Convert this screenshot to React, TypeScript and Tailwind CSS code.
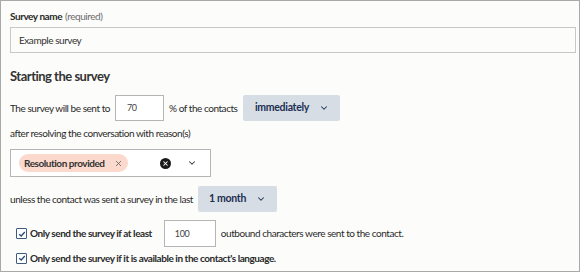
import { ChevronDown, X } from "lucide-react";

function Chevron() {
	return <ChevronDown className="w-[10px] h-[10px] text-[#1f3354]" strokeWidth={2.5} />;
}

function DropButton({ label, width }: { label: string; width: string }) {
	return (
		<button className={`${width} h-[26px] bg-[#d7dde5] rounded-[2px] flex items-center justify-center gap-[10px] text-[10.5px] font-bold text-[#1b2f52] tracking-[-0.3px]`}>
			{label}
			<Chevron />
		</button>
	);
}

function Check() {
	return (
		<span className="w-[11px] h-[11px] border border-[#3d5a80] rounded-[1px] bg-white flex items-center justify-center shrink-0">
			<svg viewBox="0 0 10 10" className="w-[8px] h-[8px]">
				<path d="M1.5 5.2 L4 7.5 L8.5 2.5" fill="none" stroke="#2b4a73" strokeWidth="1.6" />
			</svg>
		</span>
	);
}

export default function App() {
	return (
		<div
			className="w-[580px] h-[272px] border border-[#a9a9a9] bg-[#fcfcfa] pl-[9px] pr-[3px] text-[#2a2a2a] text-[10px] tracking-[-0.45px]"
			style={{ fontFamily: "Lato, 'Noto Sans', sans-serif" }}
		>
			{/* Survey name */}
			<div className="mt-[8px] h-[14px] flex items-center">
				<span className="font-bold text-[#2a2a2a]">Survey name</span>
				<span className="ml-[3px] text-[#6b6b6b]">(required)</span>
			</div>
			<div className="mt-[4px] h-[26px] border border-[#c8c8c8] bg-[#fcfcfa] flex items-center px-[8px] text-[#333]">
				Example survey
			</div>

			{/* Starting the survey */}
			<div className="mt-[15px] h-[18px] flex items-center text-[13px] font-bold text-[#333] tracking-[-0.5px]">Starting the survey</div>

			<div className="mt-[9px] h-[26px] flex items-center">
				<span>The survey will be sent to</span>
				<div className="ml-[5px] w-[49px] h-[26px] border border-[#b5b5b5] bg-white flex items-center px-[11px] text-[9px] text-[#444]">70</div>
				<span className="ml-[5px]">% of the contacts</span>
				<div className="ml-[6px]">
					<DropButton label="immediately" width="w-[97px]" />
				</div>
			</div>

			<div className="mt-[4px] h-[16px] flex items-center">after resolving the conversation with reason(s)</div>

			<div className="mt-[8px] w-[201px] h-[28px] border border-[#b5b5b5] bg-white flex items-center pl-[8px] pr-[4px]">
				<span className="h-[18px] rounded-full bg-[#fbd9cc] flex items-center pl-[5px] pr-[5px] gap-[9px] font-bold text-[#333]">
					Resolution provided
					<X className="w-[9px] h-[9px] text-[#555]" strokeWidth={2} />
				</span>
				<span className="ml-auto w-[11px] h-[11px] rounded-full bg-[#1a1a1a] flex items-center justify-center">
					<X className="w-[7px] h-[7px] text-white" strokeWidth={3.5} />
				</span>
				<span className="ml-[16px] mr-[9px]">
					<ChevronDown className="w-[10px] h-[10px] text-[#333]" strokeWidth={2.5} />
				</span>
			</div>

			<div className="mt-[9px] h-[26px] flex items-center">
				<span>unless the contact was sent a survey in the last</span>
				<div className="ml-[5px]">
					<DropButton label="1 month" width="w-[79px]" />
				</div>
			</div>

			<div className="mt-[8px] h-[27px] flex items-center pl-[6px]">
				<Check />
				<span className="ml-[3px] font-bold">Only send the survey if at least</span>
				<div className="ml-[12px] w-[52px] h-[27px] border border-[#b5b5b5] bg-white flex items-center px-[10px] text-[9px] text-[#444]">100</div>
				<span className="ml-[5px]">outbound characters were sent to the contact.</span>
			</div>

			<div className="mt-[3px] h-[16px] flex items-center pl-[6px]">
				<Check />
				<span className="ml-[3px] font-bold">Only send the survey if it is available in the contact's language.</span>
			</div>
		</div>
	);
}
